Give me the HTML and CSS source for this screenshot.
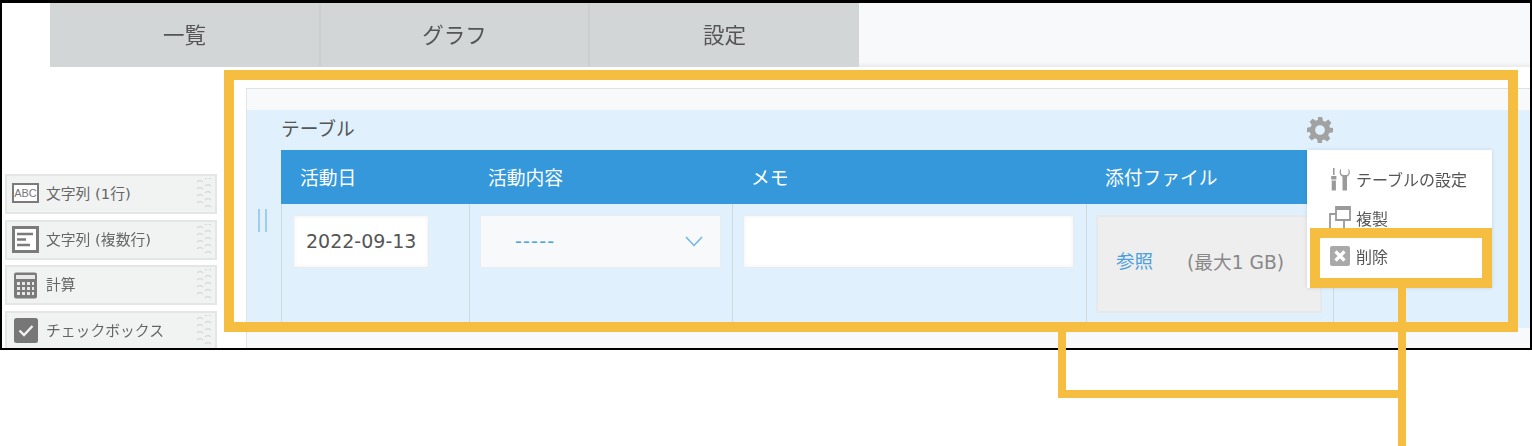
FILE: index.html
```html
<!DOCTYPE html>
<html lang="ja">
<head>
<meta charset="utf-8">
<title>テーブル</title>
<link rel="stylesheet" href="styles.css">
</head>
<body>
<div class="page">
  <div class="shot">
    <nav class="tabs">
      <div class="tab tab-wide">一覧</div>
      <div class="tab">グラフ</div>
      <div class="tab">設定</div>
    </nav>
    <div class="workspace">
      <aside class="palette">
        <div class="pal-item">
          <span class="abc-icon">ABC</span>
          <span class="pal-label">文字列 (1行)</span>
          <svg class="grip" viewBox="0 0 16 32"><path d="M1 4q3-3 6 0M1 11q3-3 6 0M1 18q3-3 6 0M1 25q3-3 6 0M9 1q3-3 6 0M9 8q3-3 6 0M9 15q3-3 6 0M9 22q3-3 6 0M9 29q3-3 6 0"/></svg>
        </div>
        <div class="pal-item">
          <svg class="pal-icon" viewBox="0 0 27 27"><rect x="1.500" y="1.500" width="24" height="24" fill="#fff" stroke="#7b7b7b" stroke-width="3"/><path d="M5 8h16M5 13.500h9M5 19h13" stroke="#7b7b7b" stroke-width="2.400"/></svg>
          <span class="pal-label">文字列 (複数行)</span>
          <svg class="grip" viewBox="0 0 16 32"><path d="M1 4q3-3 6 0M1 11q3-3 6 0M1 18q3-3 6 0M1 25q3-3 6 0M9 1q3-3 6 0M9 8q3-3 6 0M9 15q3-3 6 0M9 22q3-3 6 0M9 29q3-3 6 0"/></svg>
        </div>
        <div class="pal-item">
          <svg class="pal-icon" viewBox="0 0 27 27"><rect x="2" y="0.500" width="23" height="26" rx="2" fill="#7b7b7b"/><rect x="4" y="3" width="19" height="4" fill="#e8e8e8"/><path d="M5 10h3v3H5zM10 10h3v3h-3zM15 10h3v3h-3zM20 10h2v3h-2zM5 15h3v3H5zM10 15h3v3h-3zM15 15h3v3h-3zM20 15h2v3h-2zM5 20h3v3H5zM10 20h3v3h-3zM15 20h3v3h-3zM20 20h2v3h-2z" fill="#e8e8e8"/></svg>
          <span class="pal-label">計算</span>
          <svg class="grip" viewBox="0 0 16 32"><path d="M1 4q3-3 6 0M1 11q3-3 6 0M1 18q3-3 6 0M1 25q3-3 6 0M9 1q3-3 6 0M9 8q3-3 6 0M9 15q3-3 6 0M9 22q3-3 6 0M9 29q3-3 6 0"/></svg>
        </div>
        <div class="pal-item">
          <svg class="pal-icon" viewBox="0 0 27 27"><rect x="2" y="1" width="24" height="25" rx="2.500" fill="#777"/><path d="M7.500 13.500l4.500 4.500 8.500-9" fill="none" stroke="#f1f3f3" stroke-width="2.400"/></svg>
          <span class="pal-label">チェックボックス</span>
          <svg class="grip" viewBox="0 0 16 32"><path d="M1 4q3-3 6 0M1 11q3-3 6 0M1 18q3-3 6 0M1 25q3-3 6 0M9 1q3-3 6 0M9 8q3-3 6 0M9 15q3-3 6 0M9 22q3-3 6 0M9 29q3-3 6 0"/></svg>
        </div>
      </aside>
      <main class="canvas">
        <div class="canvas-band"></div>
        <section class="field-block">
          <div class="handle-col"><span class="handle"></span></div>
          <div class="field-body">
            <div class="field-title">
              <span class="field-name">テーブル</span>
              <svg class="gear" viewBox="0 0 24 24"><path fill-rule="evenodd" d="M10 0h4l.7 3.400 2.100.9 2.900-1.900 2.800 2.800-1.900 2.900.9 2.100L24 10v4l-3.500.8-.9 2.100 1.900 2.900-2.800 2.800-2.900-1.900-2.100.9L14 24h-4l-.7-3.400-2.100-.9-2.900 1.900-2.800-2.800 1.900-2.900-.9-2.100L0 14v-4l3.400-.7.9-2.100-1.900-2.900 2.800-2.800 2.900 1.900 2.100-.9zM12 7.500a4.500 4.500 0 1 0 0 9 4.500 4.500 0 0 0 0-9z"/></svg>
            </div>
            <div class="table">
              <div class="th">活動日</div>
              <div class="th">活動内容</div>
              <div class="th">メモ</div>
              <div class="th">添付ファイル</div>
              <div class="td"><div class="input date">2022-09-13</div></div>
              <div class="td"><div class="input select"><span class="dashes">-----</span><svg class="chev" viewBox="0 0 18 11"><path d="M1 1l8 8.500L17 1"/></svg></div></div>
              <div class="td"><div class="input memo"></div></div>
              <div class="td last"><div class="file"><span class="file-link">参照</span><span class="file-max">(最大1 GB)</span></div></div>
            </div>
          </div>
        </section>
      </main>
    </div>
    <div class="menu">
      <div class="menu-item">
        <svg class="menu-icon" viewBox="0 0 22 24"><path d="M4 1h1.600v7H4zM2.200 9h5.200v3.500H2.200zM2.700 13.500h4.200v10H2.700z"/><path d="M12 1.500C10 4 10 8 13.500 9.800V23.500h4.500V9.800C21.500 8 21.500 4 19.500 1.500V6c0 1-1 2-2 2h-3c-1 0-2.500-1-2.500-2z"/></svg>
        <span>テーブルの設定</span>
      </div>
      <div class="menu-item">
        <svg class="menu-icon" viewBox="0 0 22 24"><path d="M7 1h14v13H7z" fill="#fff" stroke="#9a9a9a" stroke-width="1.800"/><path d="M7 1h14v3H7z" fill="#9a9a9a"/><path d="M7 8H1v15M15 14v9" fill="none" stroke="#9a9a9a" stroke-width="1.800"/></svg>
        <span>複製</span>
      </div>
      <div class="menu-item">
        <svg class="menu-icon del-icon" viewBox="0 0 20 20"><rect width="20" height="20" rx="2" fill="#a9a9a9"/><path d="M5.500 5.500l9 9M14.500 5.500l-9 9" stroke="#fff" stroke-width="3.200"/></svg>
        <span>削除</span>
      </div>
    </div>
  </div>
  <div class="mark mark-main"></div>
  <div class="mark mark-delete"></div>
  <div class="line line-v1"></div>
  <div class="line line-v2"></div>
  <div class="line line-h"></div>
</div>
</body>
</html>
```
FILE: styles.css
```css
* { box-sizing: border-box; }
html, body { margin: 0; padding: 0; background: #fff; }
body { font-family: "Noto Sans CJK JP", "Noto Sans", sans-serif; color: #555; }
.page { position: relative; width: 1532px; height: 446px; overflow: hidden; }
.shot { position: relative; width: 1532px; height: 350px; border: solid #000; border-width: 3px 2px 2px; overflow: hidden; background: #fff; }

.tabs { display: flex; height: 64px; margin-left: 48px; background: linear-gradient(#f7f9fb 92%, #e9ebec); filter: blur(.35px); }
.tab { width: 269px; background: #d2d6d7; border-right: 2px solid #cbcfd0; padding-bottom: 4px; display: flex; align-items: center; justify-content: center; font-size: 21.500px; color: #555; }
.tab-wide { width: 271px; }
.tab:last-child { border-right: 0; }

.workspace { display: flex; height: 281px; filter: blur(.35px); }
.palette { width: 244px; padding: 107px 0 0 3px; display: flex; flex-direction: column; gap: 5.500px; flex: none; }
.pal-item { width: 212px; height: 40px; flex: none; display: flex; align-items: center; padding: 0 3px 0 5px; background: #f1f3f3; border: 2px solid #e4e6e6; }
.pal-icon { width: 27px; height: 27px; flex: none; margin-right: 7px; }
.abc-icon { width: 27px; height: 20px; flex: none; margin: 0 7px 2px 0; border: 2px solid #7b7b7b; background: #fff; color: #777; font: 11px/16px "Liberation Sans", sans-serif; text-align: center; }
.pal-label { flex: 1; font-family: "DejaVu Sans", "Noto Sans CJK JP", sans-serif; font-size: 14.800px; color: #666; white-space: nowrap; padding-bottom: 3px; }
.grip { width: 16px; height: 32px; flex: none; fill: none; stroke: #d6dada; stroke-width: 1.300; }

.canvas { flex: 1; margin-top: 21px; border-left: 1px solid #e3e5e5; border-top: 1px solid #dfe1e1; background: #f7f9fb; }
.canvas-band { height: 21px; }
.field-block { display: flex; height: 218px; background: #e0f0fd; }
.handle-col { width: 34px; flex: none; padding: 99px 0 0 11px; }
.handle { display: block; width: 9px; height: 23px; border: solid #9fcdee; border-width: 0 2px; }
.field-body { flex: 1; min-width: 0; }
.field-title { display: flex; align-items: center; justify-content: space-between; width: 1052px; height: 40px; font-size: 18.750px; color: #555; }
.field-name { padding-bottom: 5px; }
.gear { width: 26px; height: 26px; fill: #a2a2a2; flex: none; }
.table { display: grid; width: 1053px; grid-template-columns: 188px 263px 354px 248px; grid-template-rows: 54px 124px; }
.th { background: #3498db; color: #fff; font-size: 18.750px; padding: 0 0 2px 19px; display: flex; align-items: center; }
.td { border-left: 1px solid #cfd9e0; padding: 11px 11px 0; }
.td.last { border-right: 1px solid #cfd9e0; }
.input { height: 53px; background: #fff; border: 1px solid #e7edf1; }
.date { width: 136px; font: 19px/51px "DejaVu Sans", sans-serif; color: #555; padding-left: 12px; box-shadow: inset 0 0 4px #eee; }
.select { width: 241px; margin-left: -1px; background: #f7f9fb; display: flex; align-items: center; padding: 0 17px 0 34px; justify-content: space-between; }
.dashes { font: 19px/1 "DejaVu Sans", sans-serif; letter-spacing: 1.200px; color: #4aa3e0; }
.chev { width: 18px; height: 11px; fill: none; stroke: #6cb4e6; stroke-width: 1.500; }
.memo { width: 331px; margin-left: -1px; box-shadow: inset 0 0 4px #f0f0f0; }
.file { width: 226px; height: 98px; margin-left: -2px; background: #eee; border: 2px solid #e6e9ec; display: flex; align-items: center; padding: 0 0 8px 18px; font-size: 18.500px; }
.file-link { color: #4a9fdc; margin-right: 34px; }
.file-max { color: #888; font-family: "DejaVu Sans", "Noto Sans CJK JP", sans-serif; font-size: 18.700px; white-space: nowrap; }

.menu { position: absolute; left: 1305px; top: 147px; width: 185px; height: 138px; background: #fff; box-shadow: 0 0 4px rgba(0,0,0,.12); padding-top: 10px; filter: blur(.3px); }
.menu-item { display: flex; align-items: center; height: 38.500px; padding-left: 22px; font-size: 16px; color: #555; gap: 5px; white-space: nowrap; }
.menu-icon { width: 22px; height: 24px; flex: none; fill: #9a9a9a; }
.del-icon { height: 20px; padding: 0 1px; }

.mark { position: absolute; border: 10px solid #f6be40; }
.mark-main { left: 224px; top: 70px; width: 1294px; height: 262px; }
.mark-delete { left: 1310px; top: 228px; width: 182px; height: 60px; }
.line { position: absolute; background: #f6be40; }
.line-v1 { left: 1058px; top: 332px; width: 8px; height: 66px; }
.line-v2 { left: 1398px; top: 288px; width: 8px; height: 158px; }
.line-h { left: 1058px; top: 390px; width: 340px; height: 8px; }
```
